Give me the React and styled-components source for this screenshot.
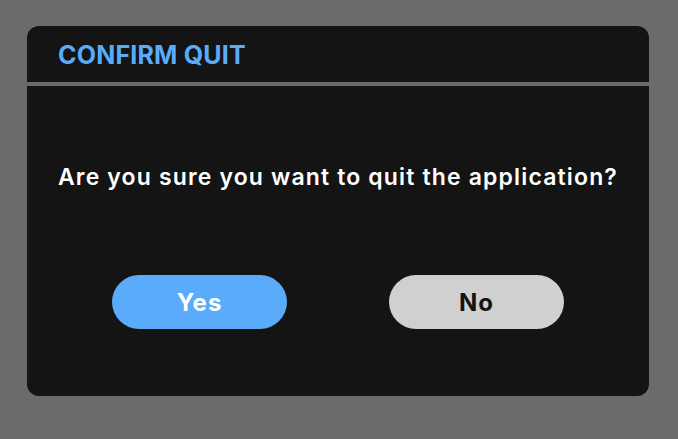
import React from 'react';
import styled, { createGlobalStyle } from 'styled-components';

const GlobalStyle = createGlobalStyle`
  html, body {
    margin: 0;
    padding: 0;
    background: #6b6b6b;
  }
  body {
    font-family: Inter, "Noto Sans", sans-serif;
  }
`;

const Page = styled.div`
  width: 678px;
  height: 439px;
  display: flex;
  align-items: flex-start;
  padding: 26px 0 0 27px;
  box-sizing: border-box;
`;

const Dialog = styled.div`
  width: 622px;
  height: 370px;
  background: #141414;
  border-radius: 12px;
  display: flex;
  flex-direction: column;
  overflow: hidden;
`;

const Header = styled.div`
  height: 60px;
  display: flex;
  align-items: center;
  padding-left: 31px;
  border-bottom: 4px solid #6b6b6b;
  box-sizing: border-box;
`;

const Title = styled.h2`
  margin: 0;
  font-size: 25px;
  font-weight: 700;
  color: #5aacfa;
  letter-spacing: 0.2px;
  padding-top: 1px;
`;

const Body = styled.div`
  flex: 1;
  display: flex;
  flex-direction: column;
  align-items: center;
`;

const Message = styled.p`
  margin: 76px 0 0;
  font-size: 23px;
  font-weight: 600;
  color: #ffffff;
  line-height: 30px;
  letter-spacing: 1.15px;
`;

const Actions = styled.div`
  display: flex;
  gap: 102px;
  margin-top: 83px;
`;

const Button = styled.button`
  width: 175px;
  height: 54px;
  border: none;
  border-radius: 27px;
  font-family: inherit;
  font-size: 24px;
  font-weight: 700;
  letter-spacing: 1px;
  cursor: pointer;
  background: ${(p) => (p.$primary ? '#5aacfa' : '#d0d0d0')};
  color: ${(p) => (p.$primary ? '#ffffff' : '#141414')};
`;

const App = () => {
  return (
    <>
      <GlobalStyle />
      <Page>
        <Dialog>
          <Header>
            <Title>CONFIRM QUIT</Title>
          </Header>
          <Body>
            <Message>Are you sure you want to quit the application?</Message>
            <Actions>
              <Button $primary>Yes</Button>
              <Button>No</Button>
            </Actions>
          </Body>
        </Dialog>
      </Page>
    </>
  );
};

export default App;
